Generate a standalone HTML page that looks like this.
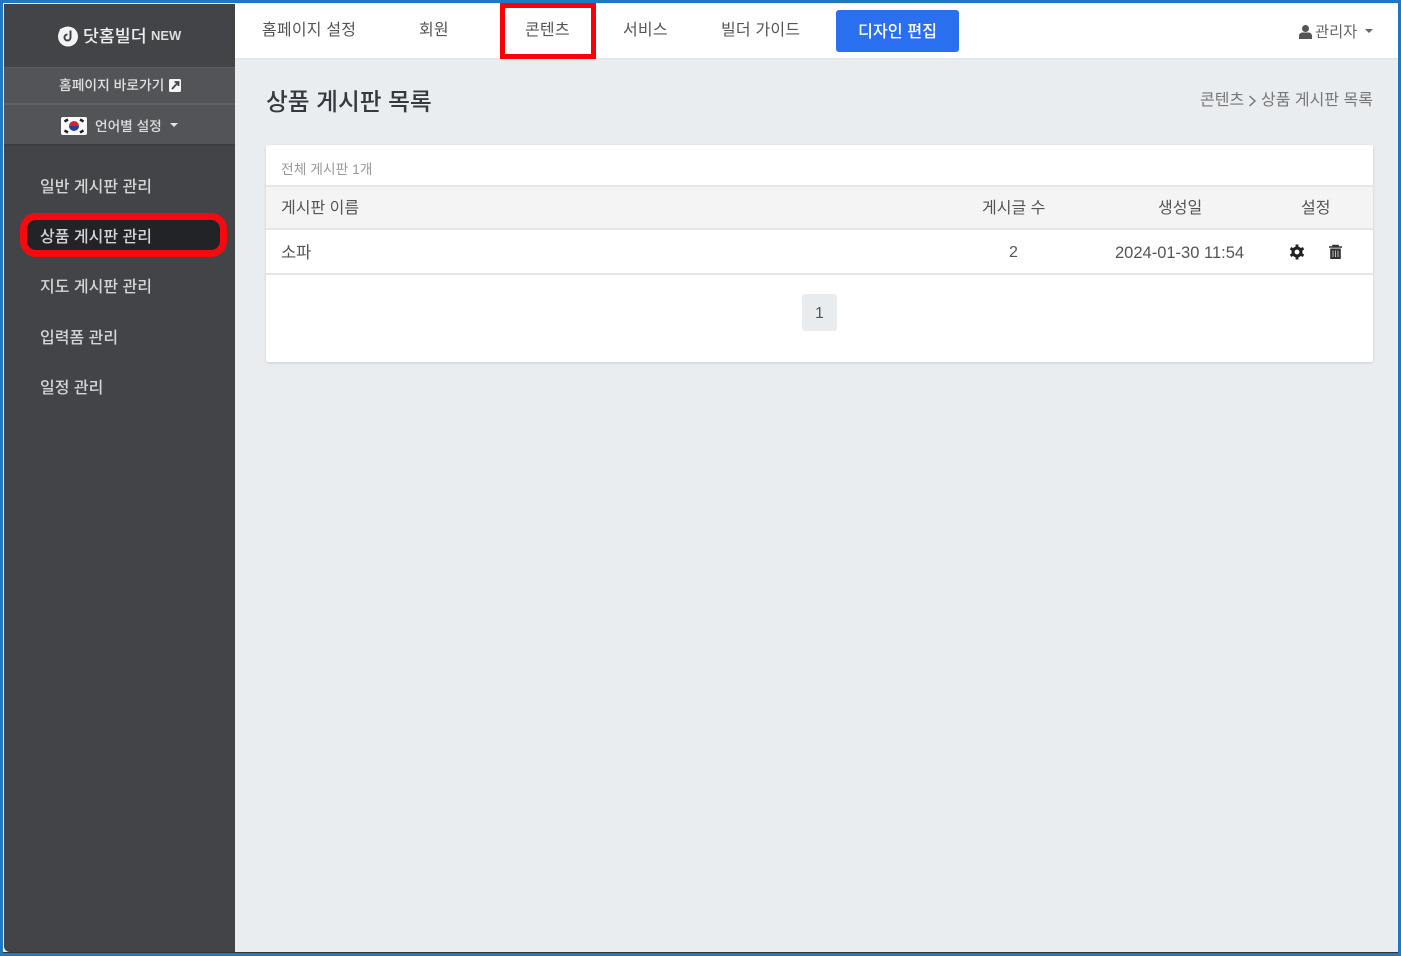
<!DOCTYPE html>
<html lang="ko"><head><meta charset="utf-8"><style>
*{box-sizing:border-box}
html,body{margin:0;padding:0}
body{width:1401px;height:956px;position:relative;overflow:hidden;background:#1f78c1;font-family:"Liberation Sans","Noto Sans CJK KR",sans-serif;color:#495057}
.a{position:absolute;white-space:nowrap}
#main{left:3px;top:3px;width:1395px;height:950px;background:#eaedf0;overflow:hidden;border-bottom:1px solid #333}
#side{left:4px;top:4px;width:231px;height:948px;background:#424448;border-bottom-left-radius:6px}
#top{left:235px;top:4px;width:1163px;height:54px;background:#fff;box-shadow:0 1px 2px rgba(0,0,0,.05)}
.nav{font-size:16px;letter-spacing:.2px;color:#555;top:21px;line-height:20px}
.m{font-size:16px;color:#d5d5d5;left:40px;line-height:20px;font-weight:500}
</style></head><body>
<div class="a" id="main"></div>
<div class="a" id="side"></div>
<div class="a" style="left:4px;top:67px;width:231px;height:79px;background:#525458;border-top:1px solid #5c5e62;border-bottom:2px solid #3c3e42"></div>
<div class="a" style="left:4px;top:103px;width:231px;height:2px;background:#606266"></div>
<svg class="a" style="left:57px;top:25px" width="22" height="22" viewBox="0 0 22 22"><circle cx="11" cy="11.500" r="10" fill="#f4f4f4"/><path d="M1 11.500L3 4 9 2Z" fill="#f4f4f4"/><path d="M13.500 5.500V12.500A3 3 0 1 1 10.500 9.500" fill="none" stroke="#424448" stroke-width="2"/></svg>
<div class="a" style="left:83px;top:26px;font-size:17.300px;line-height:20px;color:#eee;font-weight:500">닷홈빌더</div>
<div class="a" style="left:151px;top:28px;font-size:13px;line-height:16px;color:#ddd;font-weight:700">NEW</div>
<div class="a" style="left:59px;top:77px;font-size:13.800px;line-height:17px;color:#e0e0e0;font-weight:500">홈페이지 바로가기</div>
<svg class="a" style="left:169px;top:79px" width="12" height="13" viewBox="0 0 12 13"><rect width="12" height="13" rx="1.500" fill="#f4f4f4"/><path d="M3 10L9 3.500M5.500 3H9.500V7" stroke="#424448" stroke-width="1.800" fill="none"/></svg>
<svg class="a" style="left:61px;top:117px" width="26" height="18" viewBox="0 0 26 18"><rect width="26" height="18" rx="2" fill="#fafafa"/><path d="M8 9a5 5 0 0 1 10 0Z" fill="#d3222c"/><path d="M8 9a5 5 0 0 0 10 0Z" fill="#20409a"/><path d="M3.500 4.500L7 2.500M3.500 13.500L7 15.500M19 2.500L22.500 4.500M19 15.500L22.500 13.500" stroke="#222" stroke-width="2.500"/></svg>
<div class="a" style="left:95px;top:118px;font-size:13.700px;line-height:17px;color:#ddd;font-weight:500">언어별 설정</div>
<div class="a" style="left:170px;top:123px;border:4px solid transparent;border-top-color:#e5e5e5;border-bottom:0"></div>
<div class="a m" style="top:178px">일반 게시판 관리</div>
<div class="a" style="left:20px;top:213px;width:207px;height:44px;background:#222326;border:7px solid #f50a0f;border-radius:16px"></div>
<div class="a m" style="top:228px">상품 게시판 관리</div>
<div class="a m" style="top:278px">지도 게시판 관리</div>
<div class="a m" style="top:329px">입력폼 관리</div>
<div class="a m" style="top:379px">일정 관리</div>

<div class="a" id="top"></div>
<div class="a nav" style="left:262px">홈페이지 설정</div>
<div class="a nav" style="left:419px">회원</div>
<div class="a" style="left:500px;top:3px;width:96px;height:56px;background:#fff;border:5px solid #fb0006"></div>
<div class="a nav" style="left:525px">콘텐츠</div>
<div class="a nav" style="left:623px">서비스</div>
<div class="a nav" style="left:721px">빌더 가이드</div>
<div class="a" style="left:836px;top:10px;width:123px;height:42px;background:#2a6fef;border-radius:3px;color:#fff;font-size:16.200px;line-height:44px;text-align:center;font-weight:500">디자인 편집</div>
<svg class="a" style="left:1299px;top:25px" width="13" height="14" viewBox="0 0 13 14"><circle cx="6.500" cy="3.500" r="3.500" fill="#555"/><path d="M0 14V11C0 8.500 2 7.500 3.500 7.500H9.500C11 7.500 13 8.500 13 11V14Z" fill="#555"/></svg>
<div class="a" style="left:1315px;top:23px;font-size:15.300px;line-height:20px;color:#666">관리자</div>
<div class="a" style="left:1365px;top:29px;border:4px solid transparent;border-top-color:#666;border-bottom:0"></div>

<div class="a" style="left:266px;top:89px;font-size:23.700px;line-height:28px;color:#343a40;font-weight:500">상품 게시판 목록</div>
<div class="a" style="left:1200px;top:91px;font-size:16px;line-height:20px;color:#777">콘텐츠</div>
<svg class="a" style="left:1248px;top:95px" width="9" height="12" viewBox="0 0 9 12"><path d="M1.500 1L7 6 1.500 11" stroke="#777" stroke-width="1.500" fill="none"/></svg>
<div class="a" style="left:1261px;top:91px;font-size:16px;line-height:20px;color:#777">상품 게시판 목록</div>

<div class="a" style="left:266px;top:145px;width:1107px;height:217px;background:#fff;border-radius:2px;box-shadow:0 1px 3px rgba(0,0,0,.13)"></div>
<div class="a" style="left:281px;top:161px;font-size:13.800px;line-height:17px;color:#999">전체 게시판 1개</div>
<div class="a" style="left:266px;top:185px;width:1107px;height:45px;background:#f4f4f4;border-top:2px solid #e6e6e6;border-bottom:2px solid #e6e6e6"></div>
<div class="a" style="left:266px;top:273px;width:1107px;height:2px;background:#e6e6e6"></div>
<div class="a" style="left:281px;top:199px;font-size:16px;line-height:20px;color:#555">게시판 이름</div>
<div class="a" style="left:982px;top:199px;font-size:16px;line-height:20px;color:#555">게시글 수</div>
<div class="a" style="left:1158px;top:199px;font-size:16px;line-height:20px;color:#555">생성일</div>
<div class="a" style="left:1301px;top:199px;font-size:16px;line-height:20px;color:#555">설정</div>
<div class="a" style="left:281px;top:243px;font-size:16.500px;line-height:20px;color:#555">소파</div>
<div class="a" style="left:1009px;top:243px;font-size:16px;line-height:20px;color:#555">2</div>
<div class="a" style="left:1115px;top:243px;font-size:16.500px;line-height:20px;color:#555">2024-01-30 11:54</div>
<svg class="a" style="left:1289px;top:244px" width="16" height="16" viewBox="0 0 16 16"><circle cx="8" cy="8" r="4" fill="none" stroke="#222" stroke-width="3"/><path d="M8 .5V15.500M1.500 4.250L14.500 11.750M14.500 4.250L1.500 11.750" stroke="#222" stroke-width="2.800"/><circle cx="8" cy="8" r="2.400" fill="#fff"/></svg>
<svg class="a" style="left:1328px;top:244px" width="15" height="16" viewBox="0 0 15 16"><path d="M1 3H14M5 3V1.500H10V3" stroke="#333" stroke-width="1.600" fill="none"/><path d="M2.200 4.500H12.800V15H2.200Z" fill="#333"/><path d="M5 6.500V13M7.500 6.500V13M10 6.500V13" stroke="#bbb" stroke-width="1"/></svg>
<div class="a" style="left:802px;top:294px;width:35px;height:37px;background:#e9ecef;border-radius:3px;font-size:16px;line-height:39px;text-align:center;color:#555">1</div>
</body></html>
